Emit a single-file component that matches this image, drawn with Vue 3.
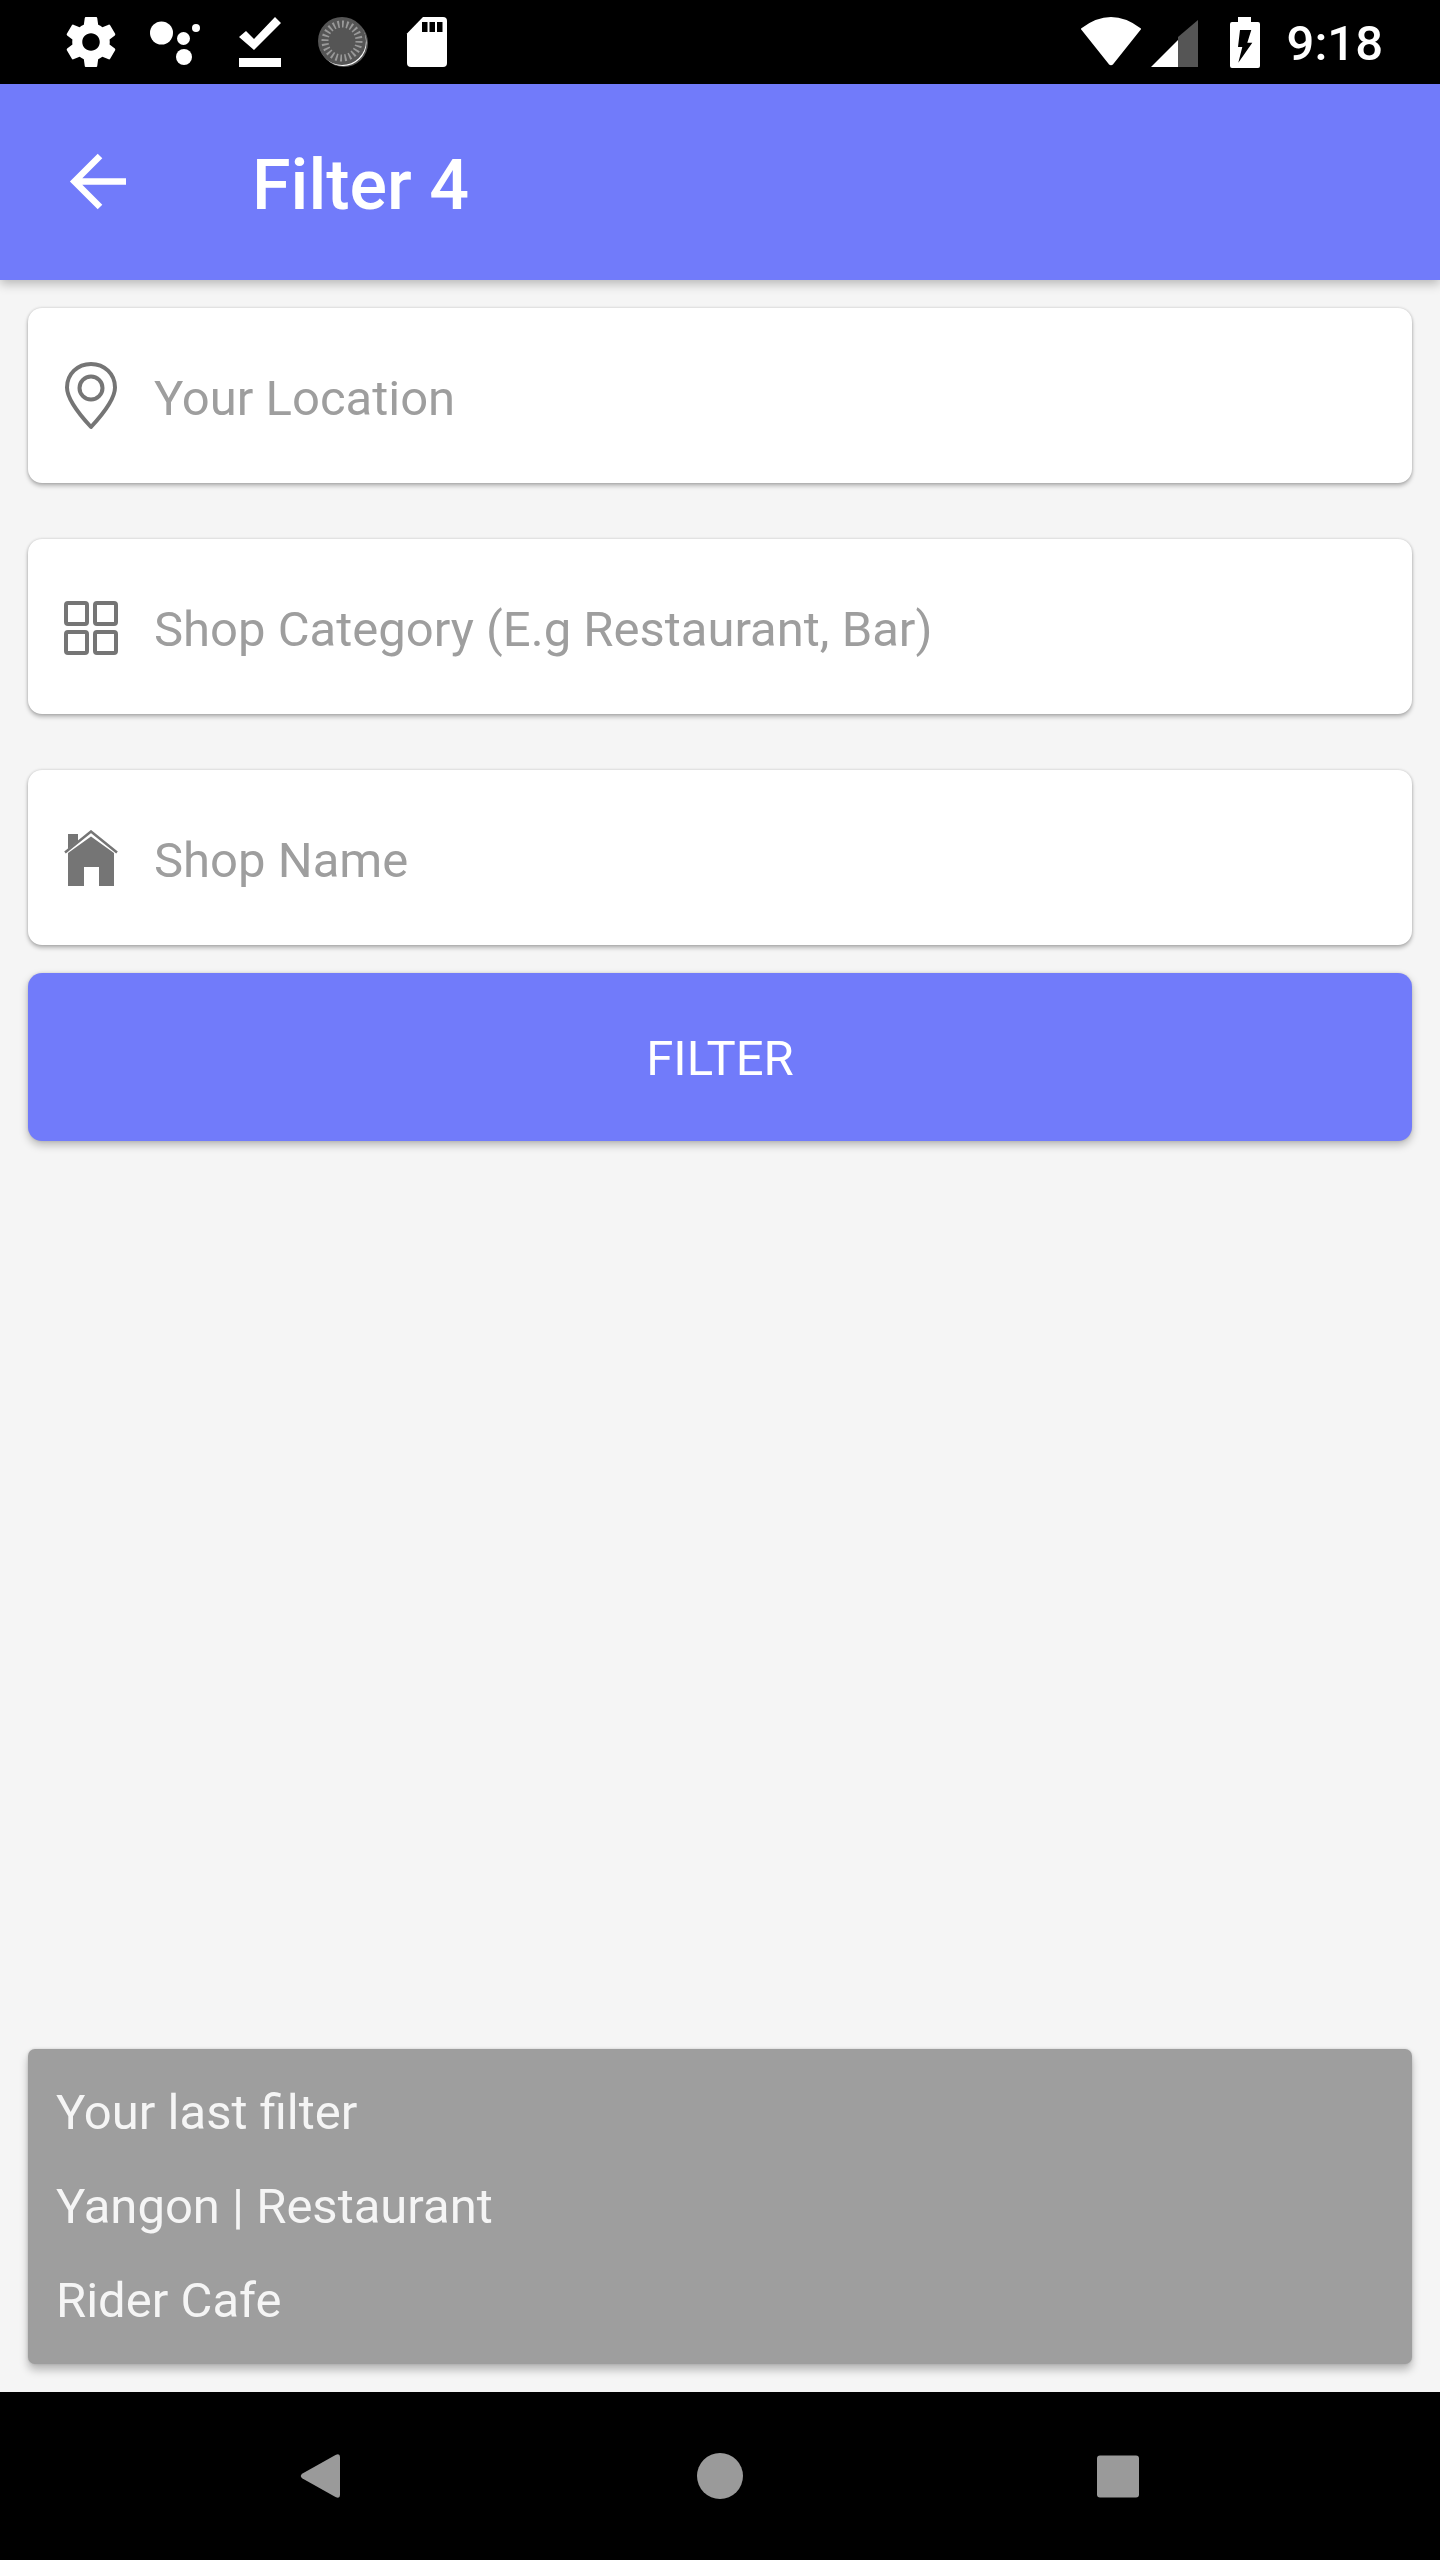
<script setup>
const lastFilter = ['Your last filter', 'Yangon | Restaurant', 'Rider Cafe']
</script>

<template>
  <div class="screen">
    <header class="status">
      <div class="status-left">
        <svg class="s-icon" viewBox="2 2 20 20"><path fill="#fff" d="M19.43 12.98c.04-.32.07-.64.07-.98s-.03-.66-.07-.98l2.11-1.65c.19-.15.24-.42.12-.64l-2-3.46c-.12-.22-.39-.3-.61-.22l-2.49 1c-.52-.4-1.08-.73-1.69-.98l-.38-2.65C14.46 2.18 14.25 2 14 2h-4c-.25 0-.46.18-.49.42l-.38 2.65c-.61.25-1.17.59-1.69.98l-2.49-1c-.23-.09-.49 0-.61.22l-2 3.46c-.13.22-.07.49.12.64l2.11 1.65c-.04.32-.07.65-.07.98s.03.66.07.98l-2.11 1.65c-.19.15-.24.42-.12.64l2 3.46c.12.22.39.3.61.22l2.49-1c.52.4 1.08.73 1.69.98l.38 2.65c.03.24.24.42.49.42h4c.25 0 .46-.18.49-.42l.38-2.65c.61-.25 1.17-.59 1.69-.98l2.49 1c.23.09.49 0 .61-.22l2-3.46c.12-.22.07-.49-.12-.64l-2.11-1.65zM12 15.5c-1.93 0-3.5-1.57-3.5-3.5s1.57-3.5 3.5-3.5 3.5 1.57 3.5 3.5-1.57 3.5-3.5 3.5z"/></svg>
        <svg class="s-icon" viewBox="0 0 50 50" fill="#fff"><circle cx="11.5" cy="16" r="11.5"/><circle cx="33.5" cy="21.5" r="6.5"/><circle cx="34" cy="40" r="8"/><circle cx="46" cy="11" r="4"/></svg>
        <svg class="s-icon" viewBox="0 0 50 50" fill="#fff"><polygon points="5,20 12,14 20,22 41,0 47,6 20,33"/><rect x="5" y="41" width="42" height="9"/></svg>
        <svg class="s-icon" viewBox="0 0 50 50">
          <circle cx="26" cy="26" r="24" fill="#555"/>
          <circle cx="25" cy="25.5" r="23.5" fill="#fff"/>
          <circle cx="24" cy="24" r="24" fill="#555"/>
          <circle cx="24" cy="24" r="17" fill="none" stroke="#999" stroke-width="7" pathLength="100" stroke-dasharray="1.700 2.467"/>
        </svg>
        <svg class="s-icon" viewBox="0 0 50 50">
          <path fill="#fff" d="M5 16.500 21 0H41Q45 0 45 4V46Q45 50 41 50H9Q5 50 5 46Z"/>
          <rect x="20" y="5" width="5.500" height="10"/><rect x="27.500" y="5" width="5.500" height="10"/><rect x="35" y="5" width="5.500" height="10"/>
        </svg>
      </div>
      <div class="status-right">
        <svg class="wifi" viewBox="0 0 60 50"><path fill="#fff" stroke="#fff" stroke-width="2" stroke-linejoin="round" d="M1 13Q30-9 59 13L31.500 47.500Q30 49 28.500 47.500Z"/></svg>
        <svg class="signal" viewBox="0 0 47 47"><polygon fill="#555" points="27,17 47,0 47,47 27,47"/><polygon fill="#fff" points="0,47 27,20 27,47"/></svg>
        <svg class="battery" viewBox="0 0 30 51">
          <path fill="#fff" d="M8 0H21V5H28Q30 5 30 7V49Q30 51 28 51H2Q0 51 0 49V7Q0 5 2 5H8Z"/>
          <polygon points="10,13 21.300,13 17.300,25.700 22.300,25.700 8.300,45.700 12.300,30 8,30"/>
        </svg>
        <span class="time">9:18</span>
      </div>
    </header>

    <div class="appbar">
      <svg class="back" viewBox="0 0 58 58"><path fill="none" stroke="#fff" stroke-width="6.500" d="M57 28.500H6M31 3 5.500 28.500 31 54"/></svg>
      <span class="title">Filter 4</span>
    </div>

    <main class="content">
      <div class="field first">
        <svg class="f-icon" viewBox="0 0 54 68" fill="none" stroke="#757575" stroke-width="4">
          <path stroke-linejoin="round" d="M27 2C13.500 2 3 12 3 25.500 3 37 14 51 27 65 40 51 51 37 51 25.500 51 12 40.500 2 27 2Z"/>
          <circle cx="27" cy="26" r="11.500"/>
        </svg>
        <span class="placeholder">Your Location</span>
      </div>
      <div class="field">
        <svg class="f-icon grid-icon" viewBox="0 0 54 54" fill="none" stroke="#757575" stroke-width="4">
          <rect x="2" y="2" width="21" height="21" rx="2"/><rect x="31" y="2" width="21" height="21" rx="2"/>
          <rect x="2" y="31" width="21" height="21" rx="2"/><rect x="31" y="31" width="21" height="21" rx="2"/>
        </svg>
        <span class="placeholder">Shop Category (E.g Restaurant, Bar)</span>
      </div>
      <div class="field">
        <svg class="f-icon" viewBox="0 0 54 56" fill="#757575">
          <polygon points="4,4 14,4 14,11 4,19"/>
          <polyline points="1,22.500 27,1.500 53,22.500" fill="none" stroke="#757575" stroke-width="2.500"/>
          <path d="M4 56V23L27 6.500 50 23V56H35V37H20V56Z"/>
        </svg>
        <span class="placeholder">Shop Name</span>
      </div>
      <button class="filter-btn">FILTER</button>
      <div class="spacer"></div>
      <section class="last">
        <p v-for="line in lastFilter" :key="line">{{ line }}</p>
      </section>
    </main>

    <footer class="nav">
      <svg class="n-icon" viewBox="0 0 46 46"><path fill="#9a9a9a" d="M5.500 20.500 38.500 2Q43 0 43 4V42Q43 46 38.500 44L5.500 25.500Q2 23 5.500 20.500Z"/></svg>
      <svg class="n-icon" viewBox="0 0 46 46"><circle cx="23" cy="23" r="23" fill="#9a9a9a"/></svg>
      <svg class="n-icon square" viewBox="0 0 46 46"><rect x="2" y="2.500" width="42" height="42" rx="3" fill="#9a9a9a"/></svg>
    </footer>
  </div>
</template>

<style scoped>
.screen {
  width: 1440px;
  height: 2560px;
  display: flex;
  flex-direction: column;
  background: #f5f5f5;
  font-family: Roboto, "Liberation Sans", sans-serif;
}
.status {
  height: 84px;
  background: #000;
  display: flex;
  align-items: center;
  justify-content: space-between;
  padding: 0 57px 0 66px;
  flex: none;
}
.status-left { display: flex; gap: 34px; }
.s-icon { width: 50px; height: 50px; display: block; }
.status-right { display: flex; align-items: center; }
.wifi { width: 60px; height: 50px; margin-top: -2px; }
.signal { width: 47px; height: 47px; margin-left: 10px; margin-top: 3px; }
.battery { width: 30px; height: 51px; margin-left: 32px; }
.time { color: #fff; font-size: 49px; font-weight: 500; margin-left: 27px; line-height: 84px; padding-top: 3px; }
.appbar {
  height: 196px;
  flex: none;
  background: #717bfa;
  display: flex;
  align-items: center;
  padding-left: 70px;
  box-shadow: 0 4px 10px rgba(0, 0, 0, .25);
  position: relative;
}
.back { width: 58px; height: 58px; margin-left: -1px; }
.title { color: #fff; font-size: 70px; font-weight: 500; margin-left: 125px; padding-top: 5px; }
.content {
  flex: 1;
  display: flex;
  flex-direction: column;
  padding: 28px 28px;
  min-height: 0;
}
.field {
  height: 175px;
  margin-top: 56px;
  background: #fff;
  border-radius: 14px;
  box-shadow: 0 3px 4px rgba(0, 0, 0, .25), 0 0 3px rgba(0, 0, 0, .18);
  display: flex;
  align-items: center;
  padding-left: 36px;
  flex: none;
}
.field.first { margin-top: 0; }
.f-icon { width: 54px; height: auto; display: block; flex: none; }
.grid-icon { margin-top: 3px; }
.placeholder { color: #9e9e9e; font-size: 49px; margin-left: 36px; padding-top: 6px; }
.filter-btn {
  height: 168px;
  margin-top: 28px;
  border: 0;
  border-radius: 14px;
  background: #717bfa;
  color: #fff;
  font-family: inherit;
  font-size: 49px;
  box-shadow: 0 4px 8px rgba(0, 0, 0, .25), 0 0 3px rgba(0, 0, 0, .12);
  flex: none;
  padding: 3px 0 0;
}
.spacer { flex: 1; }
.last {
  background: #9e9e9e;
  border-radius: 7px;
  padding: 17px 28px 16px;
  box-shadow: 0 6px 8px rgba(0, 0, 0, .25), 0 0 3px rgba(0, 0, 0, .15);
  flex: none;
}
.last p { margin: 0; color: #f5f5f5; font-size: 49px; line-height: 94px; }
.nav {
  height: 168px;
  flex: none;
  background: #000;
  display: flex;
  align-items: center;
  justify-content: center;
  gap: 354px;
  padding-right: 2px;
}
.n-icon { width: 46px; height: 46px; display: block; }
.square { margin-left: -2px; }
</style>
